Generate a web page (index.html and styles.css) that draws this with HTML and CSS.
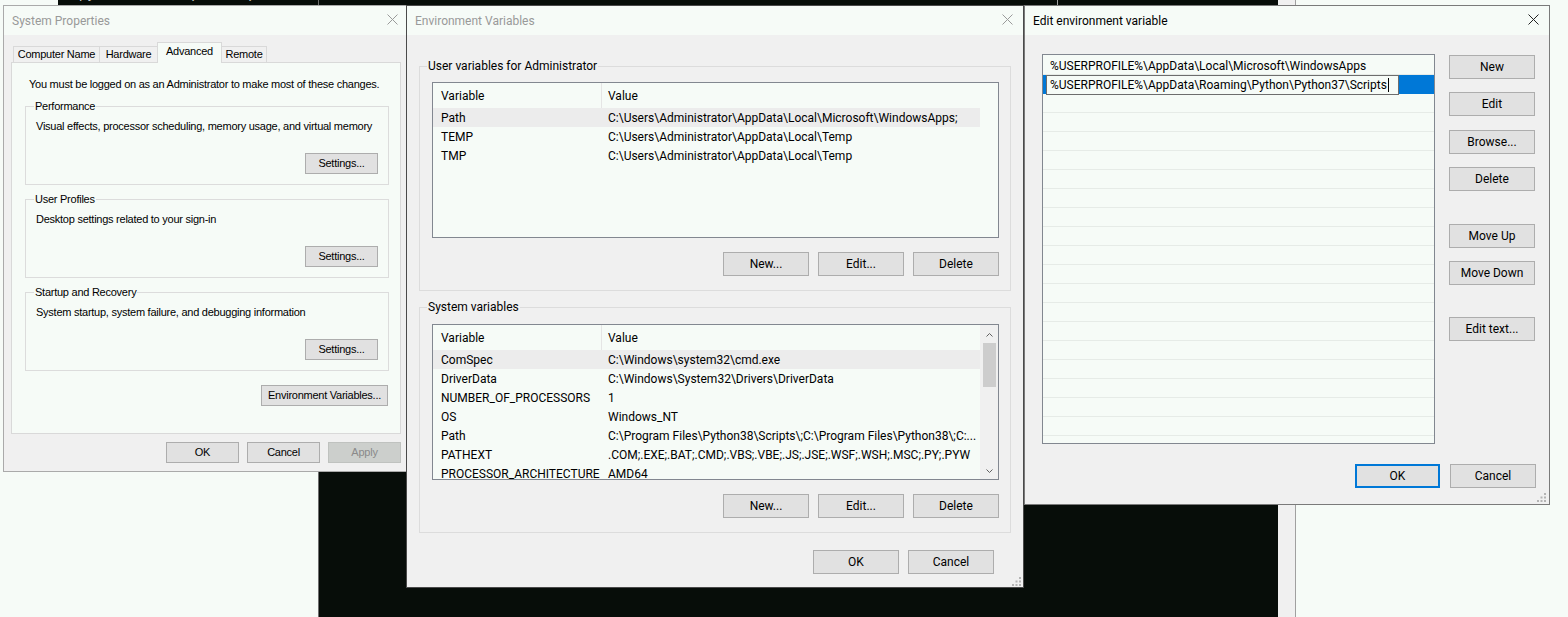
FILE: index.html
```html
<!DOCTYPE html>
<html lang="en">
<head>
<meta charset="utf-8">
<title>Environment Variables</title>
<link rel="stylesheet" href="styles.css">
</head>
<body>
<div class="desktop">
  <div class="console-top"><span class="console-text">~&gt;pyath-tools\ (12 / 1)</span></div>
  <div class="console"></div>
  <div class="pane"><div class="pane-strip"></div></div>
  <div class="topline"></div>

  <section class="win sp">
    <header class="titlebar">
      <span class="title">System Properties</span>
      <svg class="close" width="11" height="11" viewBox="0 0 11 11"><path d="M0.5 0.5L10.5 10.5M10.5 0.5L0.5 10.5" stroke="currentColor" stroke-width="1" fill="none"/></svg>
    </header>
    <div class="sp-body">
      <div class="tabs">
        <div class="tab t-cn">Computer Name</div>
        <div class="tab t-hw">Hardware</div>
        <div class="tab active t-adv">Advanced</div>
        <div class="tab t-rm">Remote</div>
      </div>
      <div class="tabpanel">
        <p class="notice">You must be logged on as an Administrator to make most of these changes.</p>
        <fieldset class="group">
          <legend>Performance</legend>
          <p>Visual effects, processor scheduling, memory usage, and virtual memory</p>
          <div class="group-actions"><button class="btn">Settings...</button></div>
        </fieldset>
        <fieldset class="group">
          <legend>User Profiles</legend>
          <p>Desktop settings related to your sign-in</p>
          <div class="group-actions"><button class="btn">Settings...</button></div>
        </fieldset>
        <fieldset class="group">
          <legend>Startup and Recovery</legend>
          <p>System startup, system failure, and debugging information</p>
          <div class="group-actions"><button class="btn">Settings...</button></div>
        </fieldset>
        <div class="panel-actions"><button class="btn wide">Environment Variables...</button></div>
      </div>
      <div class="dialog-actions">
        <button class="btn">OK</button>
        <button class="btn">Cancel</button>
        <button class="btn" disabled>Apply</button>
      </div>
    </div>
  </section>

  <section class="win ev">
    <header class="titlebar">
      <span class="title">Environment Variables</span>
      <svg class="close" width="11" height="11" viewBox="0 0 11 11"><path d="M0.5 0.5L10.5 10.5M10.5 0.5L0.5 10.5" stroke="currentColor" stroke-width="1" fill="none"/></svg>
    </header>
    <div class="ev-body">
      <fieldset class="group">
        <legend>User variables for Administrator</legend>
        <div class="list">
          <div class="rows">
            <div class="head"><span class="c1">Variable</span><span class="c2">Value</span></div>
            <div class="row sel"><span class="c1">Path</span><span class="c2">C:\Users\Administrator\AppData\Local\Microsoft\WindowsApps;</span></div>
            <div class="row"><span class="c1">TEMP</span><span class="c2">C:\Users\Administrator\AppData\Local\Temp</span></div>
            <div class="row"><span class="c1">TMP</span><span class="c2">C:\Users\Administrator\AppData\Local\Temp</span></div>
          </div>
          <div class="vscroll empty"></div>
        </div>
        <div class="actions">
          <button class="btn">New...</button>
          <button class="btn">Edit...</button>
          <button class="btn">Delete</button>
        </div>
      </fieldset>
      <fieldset class="group sys">
        <legend>System variables</legend>
        <div class="list">
          <div class="rows">
            <div class="head"><span class="c1">Variable</span><span class="c2">Value</span></div>
            <div class="row sel"><span class="c1">ComSpec</span><span class="c2">C:\Windows\system32\cmd.exe</span></div>
            <div class="row"><span class="c1">DriverData</span><span class="c2">C:\Windows\System32\Drivers\DriverData</span></div>
            <div class="row"><span class="c1">NUMBER_OF_PROCESSORS</span><span class="c2">1</span></div>
            <div class="row"><span class="c1">OS</span><span class="c2">Windows_NT</span></div>
            <div class="row"><span class="c1">Path</span><span class="c2">C:\Program Files\Python38\Scripts\;C:\Program Files\Python38\;C:...</span></div>
            <div class="row"><span class="c1">PATHEXT</span><span class="c2">.COM;.EXE;.BAT;.CMD;.VBS;.VBE;.JS;.JSE;.WSF;.WSH;.MSC;.PY;.PYW</span></div>
            <div class="row"><span class="c1">PROCESSOR_ARCHITECTURE</span><span class="c2">AMD64</span></div>
          </div>
          <div class="vscroll">
            <div class="arrow"><svg width="7" height="4" viewBox="0 0 7 4"><path d="M0.5 3.5L3.5 0.5L6.5 3.5" stroke="#606060" fill="none"/></svg></div>
            <div class="thumb"></div>
            <div class="track"></div>
            <div class="arrow"><svg width="7" height="4" viewBox="0 0 7 4"><path d="M0.5 0.5L3.5 3.5L6.5 0.5" stroke="#606060" fill="none"/></svg></div>
          </div>
        </div>
        <div class="actions">
          <button class="btn">New...</button>
          <button class="btn">Edit...</button>
          <button class="btn">Delete</button>
        </div>
      </fieldset>
      <div class="dialog-actions">
        <button class="btn">OK</button>
        <button class="btn">Cancel</button>
      </div>
      <svg class="grip" width="9" height="9" viewBox="0 0 9 9"><g fill="#b4b4b4"><rect x="7" y="0" width="2" height="2"/><rect x="7" y="3.5" width="2" height="2"/><rect x="3.5" y="3.5" width="2" height="2"/><rect x="7" y="7" width="2" height="2"/><rect x="3.5" y="7" width="2" height="2"/><rect x="0" y="7" width="2" height="2"/></g></svg>
    </div>
  </section>

  <section class="win ed">
    <header class="titlebar">
      <span class="title">Edit environment variable</span>
      <svg class="close" width="11" height="11" viewBox="0 0 11 11"><path d="M0.5 0.5L10.5 10.5M10.5 0.5L0.5 10.5" stroke="currentColor" stroke-width="1" fill="none"/></svg>
    </header>
    <div class="ed-body">
      <div class="ed-main">
        <div class="ed-list">
          <div class="ed-row">%USERPROFILE%\AppData\Local\Microsoft\WindowsApps</div>
          <div class="ed-row sel"><div class="edit">%USERPROFILE%\AppData\Roaming\Python\Python37\Scripts<span class="caret"></span></div></div>
          <div class="ed-row"></div><div class="ed-row"></div><div class="ed-row"></div><div class="ed-row"></div>
          <div class="ed-row"></div><div class="ed-row"></div><div class="ed-row"></div><div class="ed-row"></div>
          <div class="ed-row"></div><div class="ed-row"></div><div class="ed-row"></div><div class="ed-row"></div>
          <div class="ed-row"></div><div class="ed-row"></div><div class="ed-row"></div><div class="ed-row"></div>
          <div class="ed-row"></div><div class="ed-row"></div><div class="ed-row"></div>
        </div>
        <div class="ed-buttons">
          <button class="btn">New</button>
          <button class="btn">Edit</button>
          <button class="btn mt14">Browse...</button>
          <button class="btn">Delete</button>
          <button class="btn gap">Move Up</button>
          <button class="btn">Move Down</button>
          <button class="btn gap2">Edit text...</button>
        </div>
      </div>
      <div class="dialog-actions">
        <button class="btn default">OK</button>
        <button class="btn">Cancel</button>
      </div>
      <svg class="grip" width="9" height="9" viewBox="0 0 9 9"><g fill="#b4b4b4"><rect x="7" y="0" width="2" height="2"/><rect x="7" y="3.5" width="2" height="2"/><rect x="3.5" y="3.5" width="2" height="2"/><rect x="7" y="7" width="2" height="2"/><rect x="3.5" y="7" width="2" height="2"/><rect x="0" y="7" width="2" height="2"/></g></svg>
    </div>
  </section>
</div>
</body>
</html>
```

FILE: styles.css
```css
* { box-sizing: border-box; }
html, body { margin: 0; padding: 0; }
body {
  width: 1568px;
  height: 617px;
  overflow: hidden;
  background: #f6fbf7;
  font-family: "Liberation Sans", Arial, sans-serif;
  color: #000;
}
.desktop { position: relative; width: 1568px; height: 617px; overflow: hidden; }

/* background windows */
.console {
  position: absolute; left: 318px; top: 0; width: 960px; height: 617px;
  background: #070d09; border-left: 1px solid #6e6e6e;
}
.console-top {
  position: absolute; left: 58px; top: 0; width: 262px; height: 5px;
  background: #070d09; overflow: hidden;
}
.console-text {
  display: block; margin-top: -14px; padding-left: 4px;
  font: 14px/16px "Liberation Mono", monospace; color: #c8c8c8; white-space: pre;
}
.pane { position: absolute; left: 1278px; top: 0; right: 0; bottom: 0; display: flex; background: #f6fbf7; }
.pane-strip { width: 18px; background: #f0f0f0; border-right: 1px solid #a0a0a0; }
.topline { position: absolute; left: 1057px; top: 0; width: 1px; height: 5px; background: #a0a0a0; }

/* windows */
.win {
  position: absolute; display: flex; flex-direction: column;
  background: #f0f0f0; border: 1px solid #aaaaaa;
}
.sp { left: 3px; top: 5px; width: 406px; height: 467px; border-color: #aaaaaa; }
.ev { left: 406px; top: 5px; width: 618px; height: 583px; border-color: #4a4a4a; }
.ed { left: 1024px; top: 5px; width: 526px; height: 500px; border-color: #7a7a7a; }

.titlebar {
  flex: none; height: 29px; display: flex; align-items: center; justify-content: space-between;
  padding: 0 10px 0 8px; background: #f6fbf7;
  font-family: Roboto, "Liberation Sans", sans-serif; font-size: 12px; color: #999999;
}
.titlebar .title { line-height: 29px; padding-top: 1px; }
.titlebar .close { color: #9a9a9a; margin-top: -2px; }
.ed .titlebar { color: #000; }
.ed .titlebar .close { color: #222; }

.btn {
  font: inherit; letter-spacing: inherit; color: #000;
  background: #e1e1e1; border: 1px solid #adadad; padding: 0; margin: 0;
  text-align: center; flex: none;
}
.btn:disabled { background: #cccfcc; border-color: #bfc2bf; color: #8a8a8a; }

/* System Properties */
.sp-body {
  flex: 1; display: flex; flex-direction: column;
  padding: 7px 7px 0 7px; font-size: 11px; letter-spacing: -0.25px;
}
.tabs { display: flex; align-items: flex-end; height: 20px; padding-left: 2px; position: relative; z-index: 1; }
.tab {
  height: 16px; line-height: 15px; padding: 0; margin-right: -1px; text-align: center;
  border: 1px solid #d9d9d9; border-bottom: none; background: #f0f0f0; white-space: nowrap;
}
.t-cn { width: 87px; }
.t-hw { width: 59px; }
.t-adv { width: 65px; }
.t-rm { width: 46px; }
.tab.active {
  position: relative; z-index: 2; height: 21px; line-height: 17px;
  margin-bottom: -1px; background: #f6fbf7;
}
.tabpanel {
  flex: none; height: 372px; display: flex; flex-direction: column;
  border: 1px solid #d9d9d9; background: #f6fbf7; padding: 0 11px 0 13px;
}
.notice { margin: 14px 0 0 4px; line-height: 14px; }
.sp .group {
  margin: 7px 0 0; padding: 0 10px 10px 9px; min-width: 0;
  border: 1px solid #dcdcdc;
}
.sp .notice + .group { margin-top: 8px; }
.sp .group legend { padding: 0 1px; margin-left: -1px; line-height: 14px; }
.sp .group p { margin: 6px 0 0 1px; line-height: 14px; white-space: nowrap; }
.group-actions { display: flex; justify-content: flex-end; margin-top: 20px; }
.sp .btn { width: 73px; height: 21px; line-height: 19px; }
.sp .btn.wide { width: 127px; }
.panel-actions { display: flex; justify-content: flex-end; margin-top: 14px; padding-right: 1px; }
.sp .dialog-actions { display: flex; justify-content: flex-end; gap: 8px; margin-top: 8px; }

/* Environment Variables */
.ev-body {
  flex: 1; position: relative; display: flex; flex-direction: column;
  padding: 23px 12px 0 12px; font-family: Roboto, "Liberation Sans", sans-serif; font-size: 12px;
}
.ev .group { margin: 0; padding: 0 11px 14px 12px; min-width: 0; border: 1px solid #dcdcdc; }
.ev .group + .group { margin-top: 8px; }
.ev .group legend { padding: 0 1px; margin-left: -5px; line-height: 16px; }
.list {
  display: flex; height: 156px; margin-top: 8px;
  border: 1px solid #828790; background: #f6fbf7; overflow: hidden;
}
.sys .list { margin-top: 9px; }
.rows { flex: 1; min-width: 0; overflow: hidden; }
.head, .row { display: grid; grid-template-columns: 169px 1fr; white-space: nowrap; }
.head { height: 25px; line-height: 26px; }
.head .c1 { border-right: 1px solid #e5e5e5; }
.row { height: 19px; line-height: 20px; }
.row.sel { background: #ececec; }
.c1 { padding-left: 8px; overflow: hidden; }
.c2 { padding-left: 6px; overflow: hidden; }
.vscroll { flex: none; width: 18px; display: flex; flex-direction: column; background: #f0f0f0; }
.vscroll.empty { background: transparent; }
.vscroll .arrow { height: 18px; display: flex; align-items: center; justify-content: center; padding-top: 2px; }
.vscroll .thumb { height: 44px; margin: 0 2px 0 3px; background: #cdcdcd; }
.vscroll .track { flex: 1; }
.ev .actions { display: flex; justify-content: flex-end; gap: 9px; margin-top: 14px; }
.ev .btn, .ed .btn { width: 86px; height: 24px; line-height: 22px; }
.ev .dialog-actions { display: flex; justify-content: flex-end; gap: 9px; margin-top: 17px; padding-right: 17px; }
.grip { position: absolute; right: 2px; bottom: 1px; }

/* Edit environment variable */
.ed-body {
  flex: 1; position: relative; display: flex; flex-direction: column;
  padding: 19px 13px 0 17px; font-family: Roboto, "Liberation Sans", sans-serif; font-size: 12px;
}
.ed-main { display: flex; gap: 14px; }
.ed-list {
  flex: none; width: 393px; height: 390px; padding-top: 1px; overflow: hidden;
  border: 1px solid #828790; background: #f6fbf7;
}
.ed-row {
  height: 19px; line-height: 20px; padding-left: 7px; white-space: nowrap;
  border-bottom: 1px solid #e6ebe7;
}
.ed-row.sel { background: #0078d7; padding-left: 3px; border-bottom-color: #0078d7; }
.edit {
  width: 353px; height: 20px; line-height: 19px; padding-left: 3px;
  border: 1px solid #6d6d6d; background: #f6fbf7; color: #000; white-space: nowrap;
}
.caret { display: inline-block; width: 1px; height: 14px; background: #000; vertical-align: -3px; margin-left: 1px; }
.ed-buttons { display: flex; flex-direction: column; padding-top: 1px; }
.ed-buttons .btn + .btn { margin-top: 13px; }
.ed-buttons .btn.mt14 { margin-top: 14px; }
.ed-buttons .btn.gap { margin-top: 33px; }
.ed-buttons .btn.gap2 { margin-top: 32px; }
.ed .dialog-actions { display: flex; justify-content: flex-end; gap: 10px; margin-top: 20px; }
.btn.default { width: 85px; border: 2px solid #0078d7; line-height: 20px; }
.ed .grip { right: 3px; bottom: 2px; }
```
